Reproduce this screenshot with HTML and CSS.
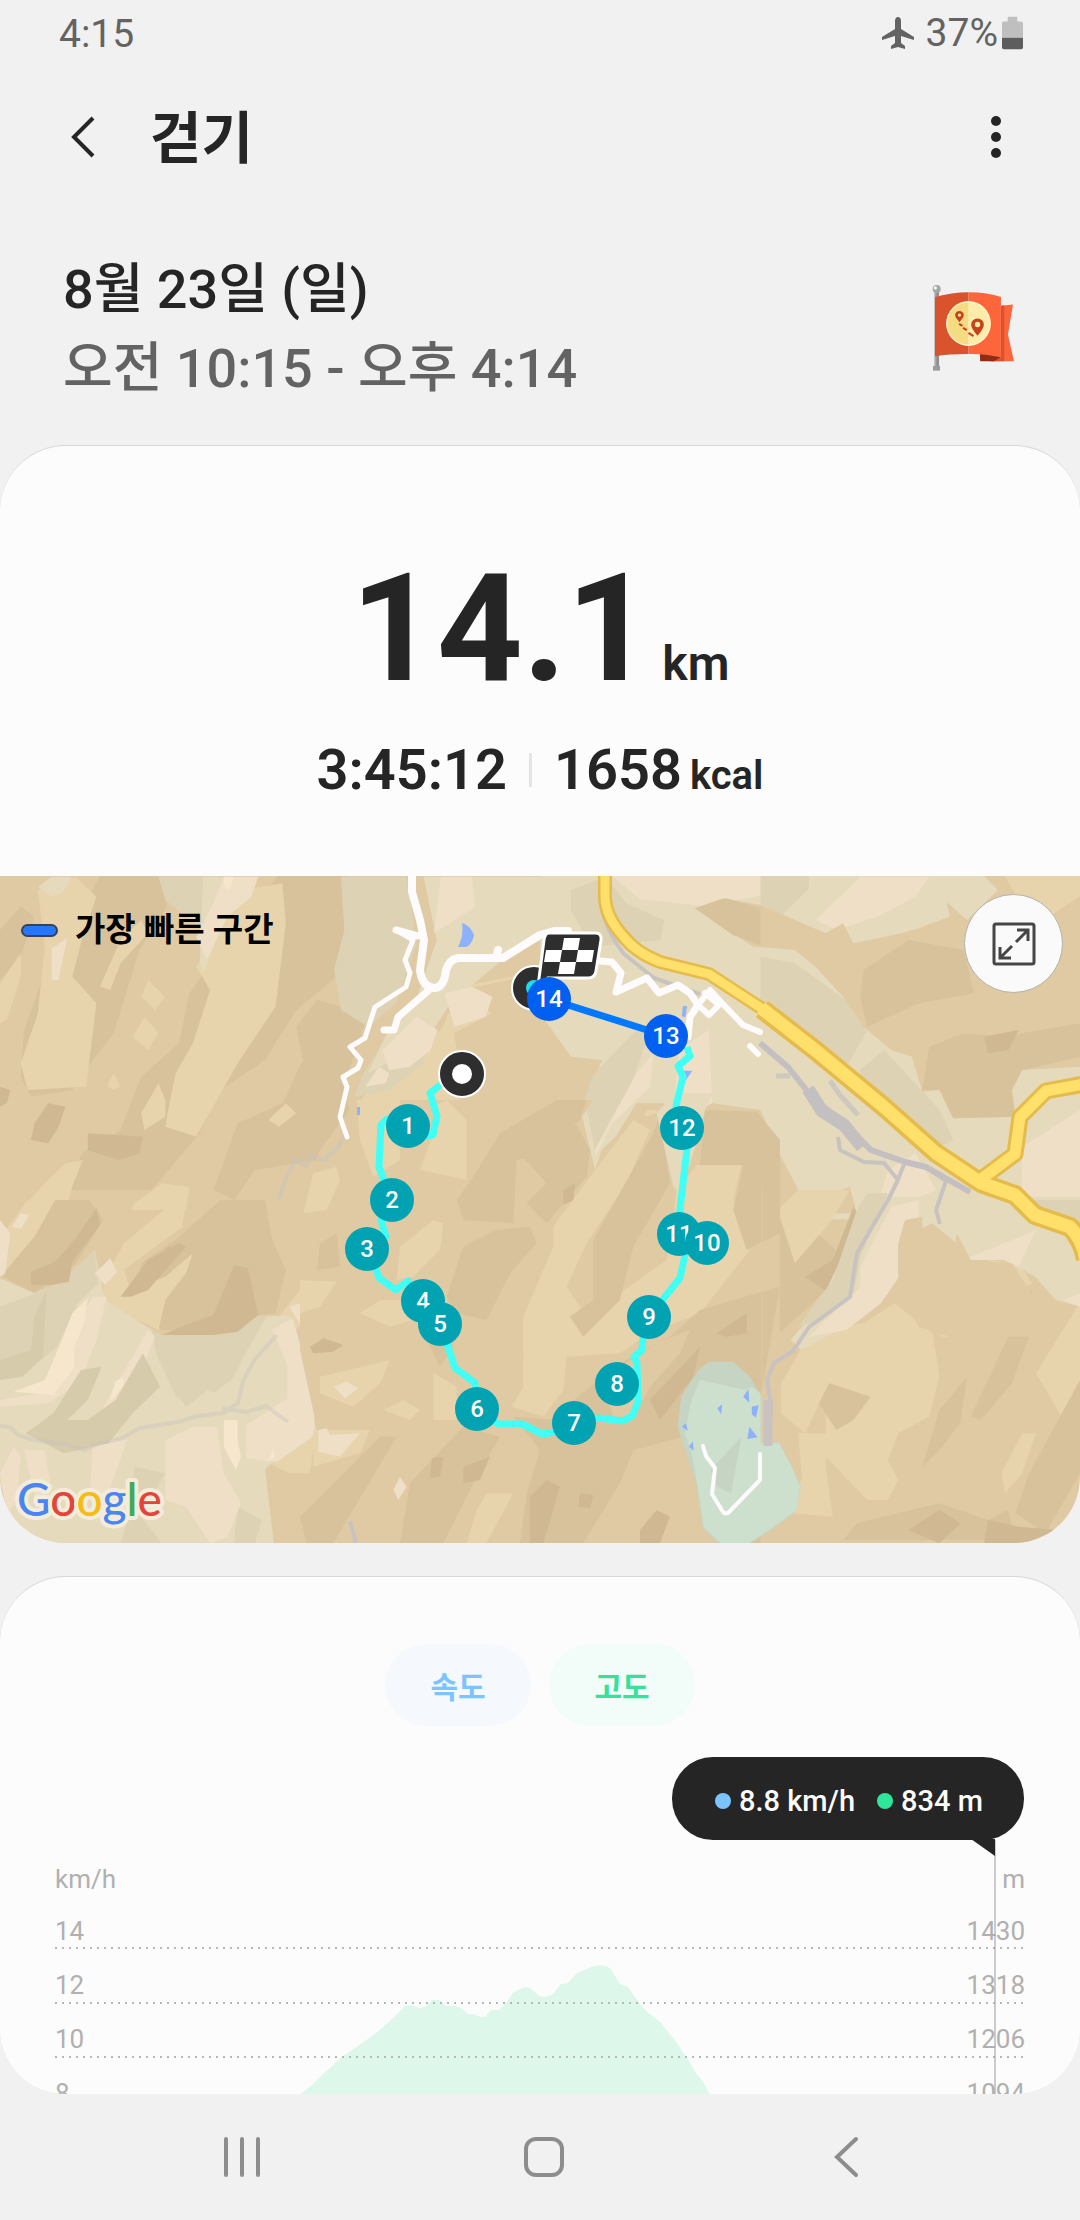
FILE: index.html
```html
<!DOCTYPE html>
<html lang="ko">
<head>
    <meta charset="UTF-8">
    <meta name="viewport" content="width=device-width">
    <title>걷기</title>
    <link rel="stylesheet" href="styles.css">
</head>
<body>
<div class="app">
    <div class="status">
        <span>4:15</span>
        <div class="status-right">
            <svg class="plane" viewBox="0 0 32 32"><path d="M16 0c2 0 3 2 3 4v8l13 8v3l-13-4v7l4 3v3l-7-2-7 2v-3l4-3v-7L0 23v-3l13-8V4c0-2 1-4 3-4z"/></svg>
            <span>37%</span>
            <svg class="battery" viewBox="0 0 22 34"><path d="M6 0h10v5h4q2 0 2 2v15H0V7q0-2 2-2h4z" fill="#bfbfbf"/><path d="M0 22h22v10q0 2-2 2H2q-2 0-2-2z" fill="#5d5d5d"/></svg>
        </div>
    </div>

    <div class="bar">
        <button class="icon-btn" aria-label="뒤로"><svg viewBox="0 0 24 42"><path d="M22 2L3 21l19 19" fill="none" stroke="#252525" stroke-width="4"/></svg></button>
        <h1>걷기</h1>
        <button class="icon-btn" aria-label="더보기"><svg viewBox="0 0 24 42"><circle cx="12" cy="5" r="5"/><circle cx="12" cy="21" r="5"/><circle cx="12" cy="37" r="5"/></svg></button>
    </div>

    <div class="when">
        <div>
            <p class="date">8월 23일 (일)</p>
            <p class="time">오전 10:15 - 오후 4:14</p>
        </div>
        <svg class="flag" viewBox="90 65 260 275">
            <rect x="100" y="90" width="14" height="230" fill="#aaa"/>
            <rect x="106" y="90" width="8" height="230" fill="#8f8f8f"/>
            <rect x="96" y="316" width="21" height="14" fill="#9b9b9b"/>
            <circle cx="107" cy="86" r="12" fill="#a5a5a5"/><circle cx="103" cy="83" r="5" fill="#f4f4f4"/>
            <path d="M299 136l36-4-15 90 18 80h-68l29-12z" fill="#fd653b"/>
            <path d="M299 136l10-1v167h-45l35-12z" fill="#d9532c"/>
            <path d="M236 280l62-4v14l-20 12h-41z" fill="#8f2c12"/>
            <path d="M102 110q50-14 100-14v184q-60 0-100 7z" fill="#d9532c"/>
            <path d="M202 96q60 0 97 14v180q-50-11-97-10z" fill="#fd653b"/>
            <circle cx="202" cy="189" r="67" fill="#fff3d0"/>
            <path d="M202 126a63 63 0 0 0 0 126z" fill="#f5dc83"/>
            <path d="M202 126a63 63 0 0 1 0 126z" fill="#fdecaa"/>
            <path d="M175 185q-13-14-13-21a13 12 0 0 1 26 0q0 7-13 21zM229 226q-19-22-19-34a19 18 0 0 1 38 0q0 12-19 34z" fill="#c7411b"/>
            <circle cx="175" cy="164" r="5" fill="#fbe79b"/><circle cx="229" cy="192" r="8" fill="#fdecaa"/>
            <path d="M174 190l10 6M186 202l11 7M202 217l15 10" stroke="#c7411b" stroke-width="6"/>
        </svg>
    </div>

    <div class="card">
        <div class="distance"><strong>14.1</strong><span>km</span></div>
        <div class="totals">
            <span class="num">3:45:12</span>
            <span class="line"></span>
            <span class="num">1658 <small>kcal</small></span>
        </div>
        <div class="map">
            <svg class="map-svg" viewBox="0 0 1080 667">
                <rect width="1080" height="667" fill="#dfcaa3"/>

                <!-- 지형: 북서 -->
                <g transform="translate(0 -6) scale(.3444 .3333)">
                    <path fill="#d7c29b" d="M300 0h165l20 110-80 130-75 250-60 80-60 90-120 20-30-60 10-140 60-170 70-120zM820 0h190l10 170-20 130-140 120-90 150-130 90-60 130-140 170H180l60-110 110-70 60-160 110-100 30-150 120-170zM0 180l60-70 40 30-40 120-60 70zM860 470l60-80 70 20 70 50-60 180 20 120-100 110-180 30-60 90-60-30 70-200 130-60 60-130z"/>
                    <path fill="#e7d3ac" d="M110 60l110-40 60 60-40 120-30 120 70 80-30 250-170 10-20-80 50-150 20-200zM700 60l120-20 10 120-30 250-110 170-60 110-60 110-90-30 10-60 20-100 50-90 50-160-40-70zM290 350l60-140 60-60 20 40-80 90-30 80zM410 730l50-90 20 50 0 50-60 40zM780 750l50-50 30 30-50 40zM310 650l20-40 20 40-20 8zM385 500l35-60 40 50-30 50zM410 380l20-50 50 50-30 40zM0 340l60-90 0 70-40 130-20 10zM1040 700l130-160 110-60 60-130 190-40 38 30v300l-170-60-80 60 40 120-70 170-100-20-120-50zM60 1020l70-80 60-60 50-10-30 80-20 70zM390 1000l80-60 80 10-10 70H380z"/>
                    <path fill="#dfcaa3" d="M1340 360l228-50v520l-90-40-50-130-90-60-20-110 110-60z"/>
                    <path fill="#ddd2b3" d="M990 20h190l30 200-60 180-80 70-80-50-20-120 30-120zM460 20h180l10 80-60 80-110-90zM1030 680l20-60 60-100 80-60 60 0-20 120-100 80z"/>
                    <path fill="#e5dabb" d="M1230 20h338v190l-110 60-150 130-50 80-100 80-90 50 60-130 80-90 60-180zM110 50l40-30h60l-30 50-30 10zM590 20h60l-10 160-50 130-10-30z"/>
                    <path fill="#eedfc6" d="M150 235l45-30-25 125h-20zM650 20h100l-20 60-70 60-60 130-30-70 50-100zM1280 20h90l10 90-120 80zM1110 540l100-100 60 40-20 60-60 50-60 10zM1290 370l80-20 60 30-20 60-90 30zM1100 590l30 20-10 30-60 10z"/>
                    <path fill="#f6e6cc" d="M650 20h28l-10 40-18-10z"/>
                    <path fill="#cfb892" d="M100 760l40-60 50 10-20 60-30 50-50-10zM255 790l160 10-10 50-60 20-90-30zM0 650l30 10-10 40-20 10z"/>
                </g>

                <!-- 지형: 북동 -->
                <g transform="translate(540 -6) scale(.3444 .3333)">
                    <path fill="#e5dabb" d="M0 18h1568v1030H640L500 700l-220 0-120 200-40-170 60-160-90-10L0 430z"/>
                    <path fill="#ddd2b3" d="M90 60l100-40 60 80 110 50-10 60-200 20-60-110zM640 18h140v40l-80 80-60 10zM640 260l100 20 160 120 50 80-80 150-230-200zM150 620l120-130 60-40-60 180-60 110-50 100-30-150zM930 600l70-60 160 180 40 90-60 30-210-160z"/>
                    <path fill="#eedfc6" d="M210 18h430v60l-170 30-180-20zM800 150l130-130h200l-40 60-110 60-120 40zM400 540l90-60 10 220-60 30-50-50 10-100zM160 840l120-230 50-60-10 100-110 110-50 100zM1010 900l80-50 60 110-130 60-30-50zM1400 830l168-110v260l-170 20z"/>
                    <path fill="#dfcaa3" d="M450 115l80-30 110 20 190 85 50-30 30 60 140-30 50-15 90-35-10-45 60 55 90-90-40-42h278v572l-168 10-30 60 10 80-180 5-40-85-50 5-30-105-60-20-80-70-60-90-80-90-60-50-120-10zM500 700l140 20 60 140 70 140 130-50 20 80H480z"/>
                    <path fill="#d7c29b" d="M450 115l90-30 100 30 0 110-80-30zM940 300l130-90 160 30 30 130-160 30-150 70-20-90zM1110 660l20-130 100-40 110 10 228-40v100l-168 40-30 60 10 80-180 5-40-85z"/>
                    <path fill="#e7d3ac" d="M1350 18h218v60l-100 70-80-60zM210 1020l60-180 40-120 30 0-20 160-40 140z"/>
                    <path fill="#cfb892" d="M1290 500l100-20-30 60-60 10z"/>
                    <path fill="#8db2fb" d="M412 602h30l-26 40zM415 408h12l-5 34-10-4z"/>
                </g>

                <!-- 지형: 남서 -->
                <g transform="translate(0 324) scale(.3444 .3333)">
                    <path fill="#d7c29b" d="M100 0h160l40 60-80 130-120 90-90-50 30-100zM640 0h130l20 120 40 90-30 130-90 10-80 40-160 0-80-80 20-120 100-70z"/>
                    <path fill="#e7d3ac" d="M10 100L80 0h80l-60 110-90 110zM300 300l0-60 60-110 150-130h30l-10 80-170 130 20 60 100-40 80-70-20 60-60 80-20 90-100-50zM810 350l60-80 40-10 0 80-60 60zM900 680h40v140l-100 0-60-30z"/>
                    <path fill="#e5dabb" d="M0 235l100 45 95-40 80-90 30 150 165 108 170-14 75-46h130l55 190 10 140-140 130 25 222H60l-60-180z"/>
                    <path fill="#ddd2b3" d="M0 320l130-50 60-40 85-80 10 100-60 60-60 130-90 80-75 20zM440 390l30 15 170-12 75-46h60l-60 110-40 80-50 40-80-20-30 40-60-130zM500 560l130-100v90l-90 70zM390 800l90 20-70 130 60 80H350l30-100zM680 1030l10-110 70 40-20 70z"/>
                    <path fill="#eedfc6" d="M0 600l170-30 70-230 30-50 40 0-30 130-50 130-90 60-140 10zM300 620l130-230 20 20-60 160-60 60-40 40zM790 390l60-35 60 220 5 130-110 80-90-10 0-100 120-80 0-100zM480 720l80-40 70 0 20 140 50 90-40 100-50 20-70-110-60-20zM70 750h60l20 130-50 10zM270 720l100 0-60 170-50 0zM0 820l40-80 20 30-10 120-30 60z"/>
                    <path fill="#d6cbab" d="M0 480l90-30 10-100 35-80-10 200-60 60-65 10zM75 700l80-60 80-130 60-10-40 100-60 60 60 0 80-60 80-140 50 100-80 80-70 90-130 30z"/>
                    <path fill="#f6e6cc" d="M40 575l90-35 50-120 30-80 45-45-10 70-30 80 0 60-60 80zM320 595l15-50 20-15 5 25-35 45zM650 660l40 0 0 60 10 50-15 40-35-70zM775 785l20-40v30z"/>
                    <path fill="#eedfc6" d="M275 220l45-45 20 40-35 40zM840 320l45-15 2 65-20-5zM35 80l25-40 25 5-25 42zM0 60l30 40-15 120-15 10z"/>
                    <path fill="#cfb892" d="M90 215l70-30 60-70 60-90 10 50-80 110-10 60-50 10-60 0zM350 290l80-110 90-50 20 10-110 130-50 20zM470 405l70-30 80-30 60-150 40 10 30 140-60 50-70 10zM450 180l40-40 30 10-40 40z"/>
                </g>

                <!-- 지형: 남동 -->
                <g transform="translate(540 324) scale(.3444 .3333)">
                    <path fill="#d7c29b" d="M640 60l120 0 100 90-10 100-80 80-130 120z"/>
                    <path fill="#e7d3ac" d="M690 30l60-60 150 0-60 100-50 60-50 60zM740 480l50-90 150-20 90-60 110 90 20 130-30 120-90 50-30 80 30 60-30 60-60 0-120-130v-200l-60 130-70-60 0-90zM750 700l80 0v100l20 150-120-10 30-110zM1200 240l110-60 80 10 40 60-130 60-80 100-60 0 50-100zM1340 820l60-120 40 0-40 120-50 60zM1440 520l120-200 8 0v370l-30 0z"/>
                    <path fill="#d7c29b" d="M1280 440l40-120 110-50-20 60-80 60zM1110 800l50-170 80-100-20 140-60 80zM1250 650l110-240 60 0-50 140-90 110zM810 610l30-60 120 40-50 70-50 30zM920 970l240-60 140 50 60-30 20 90H880zM1380 940l40-120 148-280v280l-100 180z"/>
                    <path fill="#cfb892" d="M770 230l80-50 60-160 30 50-60 130-40 80zM1070 990l90-60 60 40-60 60zM1300 960l90 20 110 10-90 40h-120z"/>
                    <path fill="#e5dabb" d="M900 120l40-130h628v330l-70-20-60-70-90-50-100 0-50-60-60-50-70 40-80 90-100 180-130 70-30-30 80-100z"/>
                    <path fill="#ddd2b3" d="M920 30l30-50h60l-80 190-20 110-90 80-70 20 100-140zM1400 0h168v110l-120-30z"/>
                    <path fill="#eedfc6" d="M930 200l90-180 80-20v60l-50 60v100l-60 90-100 80-110 20 90-90 60-60zM1250 170l120-50 70-30-50 110-40-20-100 0zM1520 300l48-20v40z"/>
                    <path fill="#dfcaa3" d="M1040 130l20-70 50-10 0 60 90 50 10-60 40 80 120 10 70 110 40 60-200 80-180-60-60-110z"/>
                </g>

                <!-- 지형: 가운데 -->
                <g transform="translate(300 224) scale(.3333)">
                    <path fill="#dfcaa3" d="M0 300L60 150 170 0h710l-50 75 40 75 10 75 25-75 95-90 70-20 50 220 20 20 50-150 25-100 155 5 70 85v660l-60 549H0l50-349-50-230z"/>
                    <path fill="#e7d3ac" d="M170 0h130v180l-80 50-40-110zM400 20l40-20 60 60v180l-140-30 40-110zM40 220l70-20 10 40-40 90-70 10zM300 440l100-80 30 10-10 80-80 80-50 10zM870 230L1000 60l50 30-70 160-120 180-60 130 60 90 240-170 30-210 60-75h135l-25 105 50 150-150 190-150 60-90 60-160 10-10 100-60 80-95-30 35-60V650l90-210v-60zM400 820l70 40v100h-70zM250 930l60-30 50 30-30 30zM0 540l110 5-50 75-60 20zM60 830l210-50-30 70-80 70-100-40zM40 990h170l-30 70-140 40zM530 1230l30-50h80l-80 149h-60zM180 640l60-40 80 0 20 60-70 20z"/>
                    <path fill="#d7c29b" d="M600 100L770 0h90l-20 60-140 110-50 10-10 190-150-10-20-60 50-70zM590 390l100-10 20 50-80 90-70 140-90-20-30-50 50-150zM720 80l110-5 40 75-10 80-120 140-60-60 60-60-90-100zM880 420l180-320 20-50 30 200-110 190-40 160-110 110-40-60 70-50zM1200 195l15-165 155 5 70 85v280l-100 50-40-120 30-135zM760 960l50-50 150-120 150-80 90-80 240-70-60 340-180 250-10-150-190 50-40 100-110 179H660l20-149 40-130-30-40-50-60zM490 980l110 30-80 140-90 179H300l30-179zM240 1010h50l-190 319H20l-20-79zM60 430l50-30 10 100-70 10zM380 720l60-40 20 60-40 60zM1290 1329l60-200 60 0-30 200z"/>
                    <path fill="#dfcaa3" d="M920 880l60-90 90-60 100-40-30 70-90 100-50 90-60 0zM1020 1080l140-60 60 200-20 109h-190l-40-90z"/>
                    <path fill="#cfb892" d="M790 270l35-20-5 50-30 15zM395 1075l35-5-10 60-30 5zM490 1100l80-30-30 70-50 10zM1250 700l90-60v60l-60 10zM690 1190l50-50 40 20-50 169h-40zM1050 900l150-160-20 90-100 130zM840 1180l40 5-10 40-35-5zM30 740l40-25 60 20-30 20-60 5zM1020 1290l50-60 40 20-30 79h-60z"/>
                    <path fill="#eedfc6" d="M100 860l40-15 35 20-40 30zM55 990l25-5 10 20 90-5-60 70-65-15zM280 1170l20-40 20 30-25 40z"/>
                    <path fill="#e5dabb" d="M1070 40l50-60 120 0-25 50-25 100-50 150-20-20z"/>
                </g>
                <path d="M762 310v200M762 600v66" stroke="#e3cfa8" opacity=".5"/>

                <!-- 호수 공원 -->
                <g transform="translate(540 324) scale(.3444 .3333)">
                    <path fill="#c6d5c3" d="M400 680l10-90 50-80 30-25h70l50 45 33 60v140l50-5 40 80 25 55-15 75-80 60-60 40-80 0-50-50-20-140-40-120z"/>
                    <path fill="#cddfcd" d="M440 760l-20-60 20-100 25-60 130 30 20-10 25 20v150l55 0 40 80 20 50-10 70-80 60-60 40-80 0-50-50-20-140z"/>
                    <path fill="#c6d5c3" d="M585 710l-30 170-40-20-20-50zM515 490l35 0-5 28z"/>
                    <path fill="#8db2fb" d="M590 590l15-22 3 40zM615 620l20-5-8 38-12-10zM515 625l14-12-3 30zM608 680l24 32-30 5zM412 680l12-10 5 22zM432 740l12-16 2 28z"/>
                </g>

                <!-- 회색 길 -->
                <g fill="none" stroke="#c8c3c0" stroke-width="4" stroke-linejoin="round">
                    <path d="M0 550l10 1 8 8 16 5 30 4 20 6 16-7 20-4 20-11 38-6 20-6 25-3 15-10 5-22 12-22 22-24M222 532l24 4 20-6 22 16" opacity=".4"/>
                    <path d="M344 260l-6 12-14 12-12-4-6 10-10-6-8 14-10 26" opacity=".5"/>
                    <path d="M602 34q6 24 22 44l30 24 46 16M838 261l2 13 24 12 20 1 14 17M936 334l4 14M905 286l-8 20-9 18-31 53-7 44-41 30-16 24-19 12-7 17 4 24-2 40M350 645l6 22M926 291l20 14-10 29"/>
                    <path d="M760 167l28 24 24 30 31 26 28 27 34 12 21 5 44 25" stroke="#c4c0c1" stroke-width="6"/>
                    <path d="M808 213l14 22 22 14 18 22" stroke="#c4c0c1" stroke-width="13"/>
                    <path d="M806 160l16 10M776 200h14M830 205l10 14 18 20" stroke="#c4c0c1" stroke-width="5" opacity=".7"/>
                    <path d="M768 524v46" stroke-width="9"/>
                </g>
                <!-- 흰 길 -->
                <g fill="none" stroke="#fdfbfc" stroke-linejoin="round" stroke-linecap="round">
                    <path d="M412 0v16l8 28 4 20-4 30q2 17 14 18 10 0 12-18 4-12 14-12h43l37-23 14-4h14M496 82l2-8" stroke-width="8"/>
                    <path d="M396 54l22 6M429 114l-31 27-4 13h-10" stroke-width="7"/>
                    <path d="M396 54l17 10-8 20 5 13-4 14-31 20-10 31-15 9 11 13-3 8-15 9 4 10-7 30 7 20" stroke-width="5"/>
                    <path d="M600 85l12 1 9 11-5 19 31-14 12 15 19-8 12 8 8 12-8 12-2 20M644 80l14 9" stroke-width="7"/>
                    <path d="M698 129l12-15 12 13 21 22 17 7M698 129l11 10 10-10-14-12M750 170l8 8" stroke-width="6"/>
                    <path d="M703 570l3 10 9 12-3 26 11 18q3 3 6 0l31-32v-26" stroke-width="4"/>
                </g>
                <!-- 국도 -->
                <g fill="none" stroke-linejoin="round" stroke="#e5bb4c">
                    <path d="M605 0v20q0 20 18 40 12 16 37 26l49 12 55 36" stroke-width="14"/>
                    <path d="M980 304l35-26 5-37 26-26 38-7" stroke-width="17"/>
                    <path d="M762 133l53 41 69 57 52 46 45 30 34 12 20 20 35 12q12 12 16 32" stroke-width="20"/>
                    <g stroke="#ffe06a">
                        <path d="M605 0v20q0 20 18 40 12 16 37 26l49 12 55 36" stroke-width="9"/>
                        <path d="M980 304l35-26 5-37 26-26 38-7" stroke-width="11"/>
                        <path d="M761 132l54 42 69 57 52 46 45 30 34 12 20 20 35 12q12 12 16 32" stroke-width="13"/>
                    </g>
                </g>
                <path d="M462 47q8 2 12 12-2 10-8 12h-8q6-12 4-24zM357 231h3v8h-3z" fill="#8db2fb"/>

                <!-- 이동 경로 -->
                <circle cx="534" cy="112" r="22" fill="#2e2e2e" stroke="#fff" stroke-width="2"/>
                <circle cx="534" cy="112" r="8" fill="#1fdde6"/>
                <path class="route" d="M462 198l-23 12-9 7 7 23-4 19-6 1-40-17-6 6-2 42 5 13 8 20-11 20 5 17-19 12 10 23 2 6 17 12 12-9 32 43 8 23 7 21 20 15 2 26 21 15h24l20 10 14-2 42-14 25 3 9-5 6-14-1-39-3-6 8-7 1-12 21-40 16-20 5-23-5-46 7-60-11-43 7-29-5-11 12-10-3-9"/>
                <path d="M549 123l117 37" stroke="#0078ff" stroke-width="7"/>
                <circle cx="462" cy="198" r="23" fill="#2e2e2e" stroke="#fff" stroke-width="2"/>
                <circle cx="462" cy="198" r="10" fill="#fff"/>
                <g class="pins">
                    <circle cx="408" cy="250" r="22"/><text x="408" y="258">1</text>
                    <circle cx="392" cy="324" r="22"/><text x="392" y="332">2</text>
                    <circle cx="367" cy="373" r="22"/><text x="367" y="381">3</text>
                    <circle cx="423" cy="425" r="22"/><text x="423" y="433">4</text>
                    <circle cx="440" cy="448" r="22"/><text x="440" y="456">5</text>
                    <circle cx="477" cy="533" r="22"/><text x="477" y="541">6</text>
                    <circle cx="574" cy="547" r="22"/><text x="574" y="555">7</text>
                    <circle cx="617" cy="508" r="22"/><text x="617" y="516">8</text>
                    <circle cx="649" cy="441" r="22"/><text x="649" y="449">9</text>
                    <circle cx="679" cy="358" r="22"/><text x="679" y="366">11</text>
                    <circle cx="707" cy="367" r="22"/><text x="707" y="375">10</text>
                    <circle cx="682" cy="252" r="22"/><text x="682" y="260">12</text>
                    <circle class="fast" cx="666" cy="160" r="22"/><text x="666" y="168">13</text>
                </g>
                <!-- 도착 깃발 -->
                <path d="M549 57h46q7 0 6 7l-5 31q-1 7-8 7h-40l-4 12-6-4 6-46q1-7 5-7z" fill="#2e2e2e" stroke="#fff" stroke-width="3"/>
                <path d="M564 62h16l-2 12h-16zM546 74h16l-2 12h-16zM578 74h16l-2 12h-16zM560 86h16l-2 12h-16z" fill="#fff"/>
                <g class="pins"><circle class="fast" cx="549" cy="123" r="22"/><text x="549" y="131">14</text></g>
                <text class="google" x="17" y="640"><tspan fill="#4a86ee">G</tspan><tspan fill="#e3453a">o</tspan><tspan fill="#f6bc14">o</tspan><tspan fill="#4a86ee">g</tspan><tspan fill="#3faa5a">l</tspan><tspan fill="#e3453a">e</tspan></text>
            </svg>
            <div class="legend"><i></i>가장 빠른 구간</div>
            <button class="expand" aria-label="지도 확대">
                <svg viewBox="0 0 44 44" fill="none" stroke="#454545"><rect x="2" y="2" width="40" height="40" rx="2" stroke-width="3"/><path d="M24 20L35 9M25 8h11v11M20 24L9 35M8 25v11h11" stroke-width="3"/></svg>
            </button>
        </div>
    </div>

    <div class="card chart-card">
        <div class="tabs">
            <button class="speed">속도</button>
            <button class="height">고도</button>
        </div>
        <div class="tip"><i></i><span>8.8 km/h</span><i class="green"></i><span>834 m</span></div>
        <svg class="chart" viewBox="0 0 1080 300">
            <path fill="#ddf7eb" d="M262 300l40-47 11-9 9-9 20-18 30-21 5-4 12-10 15-15q8-3 15 1 7 0 13-8h7l7 6h10l5 2 7 6h6q7 5 12 2l5-6h8l7-7 7-10q12-8 17-5l9 8q8 2 14-2l8-10 7-1 9-10 17-7q9-2 16 2l10 16 8 3 6 9 12 15 14 11 14 17 15 22 8 14 5 5 7 13 30 47z"/>
            <g class="grid">
                <path d="M55 108h970M55 163h970M55 217h970M55 272h970"/>
            </g>
            <text x="55" y="48">km/h</text>
            <text x="55" y="100">14</text>
            <text x="55" y="154">12</text>
            <text x="55" y="208">10</text>
            <text x="55" y="262">8</text>
            <g text-anchor="end">
                <text x="1025" y="48">m</text>
                <text x="1025" y="100">1430</text>
                <text x="1025" y="154">1318</text>
                <text x="1025" y="208">1206</text>
                <text x="1025" y="262">1094</text>
            </g>
            <path d="M995 0v300" stroke="#9a9a9a"/>
        </svg>
    </div>

    <div class="nav">
        <button aria-label="최근 앱"><svg viewBox="0 0 42 42"><path d="M5 3v36M21 3v36M37 3v36"/></svg></button>
        <button aria-label="홈"><svg viewBox="0 0 42 42"><rect x="3" y="3" width="36" height="36" rx="10"/></svg></button>
        <button aria-label="뒤로"><svg viewBox="0 0 42 42"><path d="M31 3L12 21l19 18"/></svg></button>
    </div>
</div>
</body>
</html>
```

FILE: styles.css
```css
* {
    padding: 0;
    margin: 0;
    box-sizing: border-box;
}

body {
    background: #f1f1f1;
    color: #252525;
    font-family: Roboto, "Noto Sans CJK KR", sans-serif;
}

button {
    border: 0;
    background: none;
    font-family: inherit;
    cursor: pointer;
}

svg {
    display: block;
}

.app {
    display: flex;
    flex-direction: column;
    height: 100vh;
    overflow: hidden;
}

.status {
    display: flex;
    justify-content: space-between;
    height: 66px;
    padding: 0 57px 0 59px;
    font-size: 39px;
    line-height: 68px;
    color: #636363;
}

.status-right {
    display: flex;
    align-items: center;
}

.plane {
    width: 32px;
    height: 32px;
    margin-right: 12px;
    fill: #636363;
}

.battery {
    width: 21px;
    height: 34px;
    margin-left: 4px;
}

.bar {
    display: flex;
    align-items: center;
    height: 142px;
    padding: 0 48px 0 47px;
}

.icon-btn {
    width: 72px;
    height: 72px;
}

.icon-btn svg {
    width: 24px;
    height: 42px;
    margin: 0 auto;
    fill: #252525;
}

.bar h1 {
    flex: 1;
    padding-top: 4px;
    margin-left: 31px;
    font-size: 56px;
    line-height: 72px;
}

.when {
    display: flex;
    justify-content: space-between;
    align-items: center;
    height: 237px;
    padding: 2px 62px 0 63px;
}

.when p {
    padding-top: 2px;
    font-size: 54px;
    font-weight: 500;
    line-height: 77px;
}

.when .time {
    color: #636363;
}

.flag {
    width: 87px;
    height: 92px;
}

.card {
    flex: none;
    overflow: hidden;
    background: #fcfcfc;
    border-top: 1px solid #d8d8d8;
    border-radius: 66px;
}

.distance {
    display: flex;
    justify-content: center;
    align-items: baseline;
    height: 274px;
    padding-top: 88px;
    line-height: 190px;
}

.distance strong {
    font-size: 150px;
    font-weight: 700;
}

.distance span {
    margin-left: 10px;
    font-size: 48px;
    font-weight: 600;
}

.totals {
    display: flex;
    justify-content: center;
    align-items: center;
    height: 156px;
    padding-bottom: 56px;
}

.num {
    font-size: 56px;
    font-weight: 600;
}

.num small {
    margin-left: -6px;
    font-size: 40px;
}

.line {
    width: 3px;
    height: 34px;
    margin: 0 22px;
    background: #e4e4e4;
}

.map {
    position: relative;
}

.map-svg {
    width: 100%;
}

.route {
    fill: none;
    stroke: #41fff5;
    stroke-width: 7;
    stroke-linejoin: round;
}

.pins circle {
    fill: #01a2b2;
}

.pins .fast {
    fill: #0260f0;
}

.pins text {
    font-size: 24px;
    font-weight: 500;
    text-anchor: middle;
    fill: #fff;
}

.google {
    font-family: Lato, sans-serif;
    font-size: 46px;
    font-weight: 500;
    stroke: #f4ecdb;
    stroke-width: 8px;
    stroke-linejoin: round;
    paint-order: stroke;
}

.legend {
    position: absolute;
    top: 31px;
    left: 21px;
    display: flex;
    align-items: center;
    gap: 17px;
    font-size: 33px;
    font-weight: 700;
    line-height: 46px;
    color: #000;
}

.legend i {
    width: 37px;
    height: 13px;
    border: 2px solid #36425c;
    border-radius: 7px;
    background: #2478ff;
}

.expand {
    position: absolute;
    top: 18px;
    right: 17px;
    width: 99px;
    height: 99px;
    border: 1px solid #b5b0a8;
    border-radius: 50%;
    background: #fafafa;
}

.expand svg {
    width: 44px;
    height: 44px;
    margin: 0 auto;
}

.chart-card {
    flex: 1 1 0;
    min-height: 0;
    margin-top: 33px;
}

.tabs {
    display: flex;
    justify-content: center;
    gap: 18px;
    padding-top: 67px;
}

.tabs button {
    width: 146px;
    height: 82px;
    border-radius: 41px;
    font-size: 30px;
    font-weight: 700;
}

.speed {
    background: #f5f9fd;
    color: #7cc4ff;
}

.height {
    background: #f2fcf8;
    color: #37e19c;
}

.tip {
    position: relative;
    display: flex;
    align-items: center;
    width: 352px;
    height: 83px;
    margin: 31px 56px 0 auto;
    padding: 4px 0 0 43px;
    border-radius: 41px;
    background: #252525;
    color: #fcfcfc;
    font-size: 29px;
    font-weight: 500;
    line-height: 36px;
}

.tip::after {
    content: "";
    position: absolute;
    top: 82px;
    right: 29px;
    border-top: 17px solid #252525;
    border-left: 24px solid transparent;
}

.tip i {
    width: 16px;
    height: 16px;
    margin-right: 8px;
    border-radius: 50%;
    background: #7cc4ff;
}

.tip span + i {
    margin-left: 22px;
}

.tip .green {
    background: #30e59c;
}

.chart {
    width: 100%;
}

.chart text {
    font-size: 26px;
    fill: #b0b0b0;
}

.grid path {
    fill: none;
    stroke: #b4b9b6;
    stroke-width: 2;
    stroke-dasharray: 2 5;
}

.nav {
    display: flex;
    flex: none;
    height: 126px;
    padding: 0 83px 0 91px;
}

.nav button {
    flex: 1;
}

.nav svg {
    width: 42px;
    height: 42px;
    margin: 0 auto;
    fill: none;
    stroke: #8d8d8d;
    stroke-width: 4;
    stroke-linecap: round;
}
```
